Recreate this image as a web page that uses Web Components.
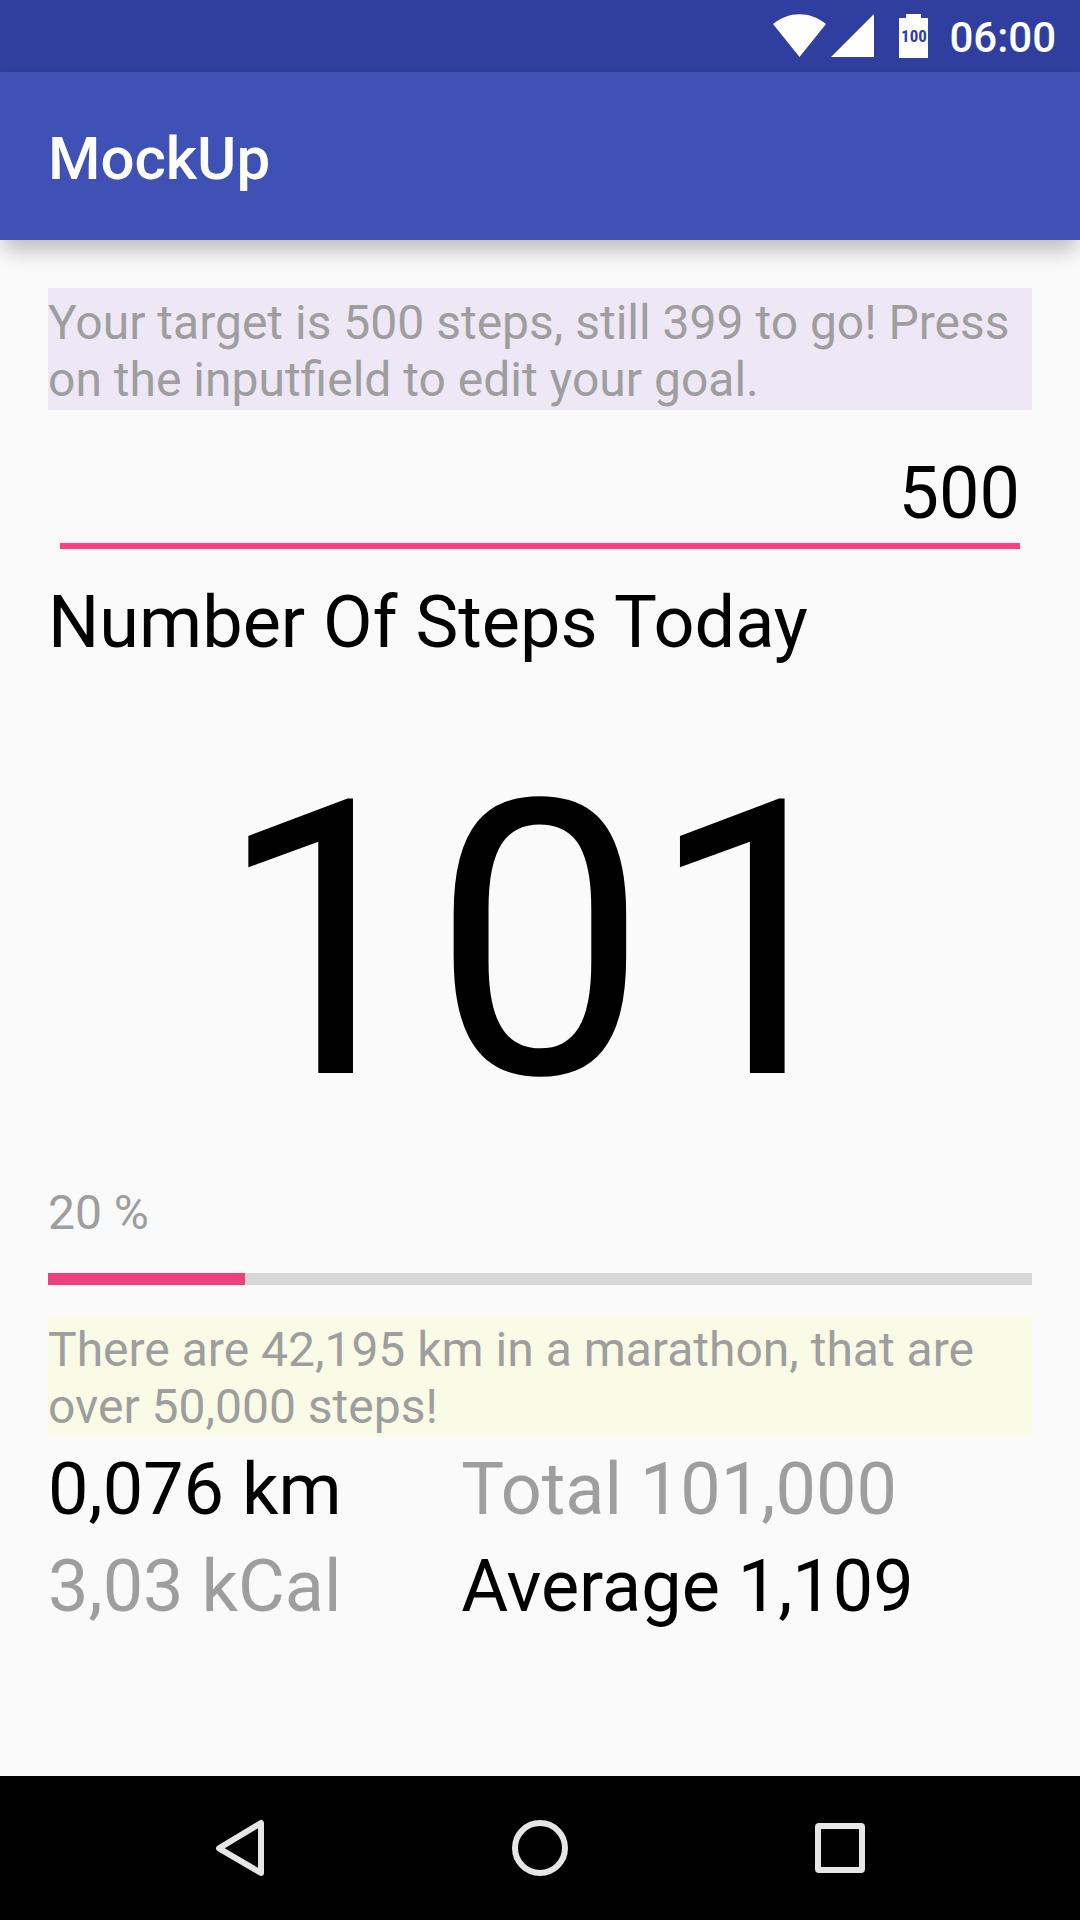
<!DOCTYPE html>
<html lang="en">
<head>
<meta charset="utf-8">
<meta name="viewport" content="width=device-width, initial-scale=1">
<title>MockUp</title>
<style>
  body { margin: 0; background: #fafafa; font-family: Roboto, "Noto Sans", sans-serif; color: #000; }
</style>
</head>
<body>
<step-app></step-app>

<script>
const define = (name, html) => {
  const template = document.createElement('template');
  template.innerHTML = html;
  customElements.define(name, class extends HTMLElement {
    constructor() {
      super();
      this.attachShadow({ mode: 'open' }).append(template.content.cloneNode(true));
    }
  });
};

define('status-bar', `
  <style>
    :host { display: flex; align-items: center; justify-content: flex-end; height: 72px; padding: 0 24px; background: #303f9f; color: #fff; }
    svg { display: block; fill: #fff; }
    .signal { margin-left: 5px; }
    .battery { margin: 0 21px 0 25px; }
    .battery text { fill: #303f9f; font: 700 17px "Roboto Condensed", Roboto, sans-serif; text-anchor: middle; }
    time { font-size: 42px; font-weight: 500; line-height: 49px; padding-top: 3px; }
  </style>
  <svg class="wifi" width="53" height="44" viewBox="0 0 53 44" aria-label="Wi-Fi" role="img"><path d="M0 10C16-3 37-3 53 10L26.500 43Z"/></svg>
  <svg class="signal" width="43" height="44" viewBox="0 0 43 44" aria-label="Signal" role="img"><path d="M43 0V43H0Z"/></svg>
  <svg class="battery" width="29" height="44" viewBox="0 0 29 44" aria-label="Battery" role="img"><path d="M7 0H22V4H29V44H0V4H7Z"/><text x="15" y="28">100</text></svg>
  <time>06:00</time>
`);

define('app-bar', `
  <style>
    :host { display: flex; align-items: center; box-sizing: border-box; height: 168px; padding: 6px 48px 0; background: #3f51b5; color: #fff; box-shadow: 0 14px 20px -4px rgba(0, 0, 0, .26); }
    h1 { margin: 0; font-size: 60px; font-weight: 500; line-height: 70px; }
  </style>
  <h1><slot></slot></h1>
`);

define('hint-card', `
  <style>
    :host { display: block; padding: 6px 0 2px; background: #ede7f6; color: #9e9e9e; font-size: 48px; line-height: 57px; }
    :host([tone="lime"]) { background: #f9fbe7; }
  </style>
  <slot></slot>
`);

define('goal-field', `
  <style>
    :host { display: block; padding: 0 12px; }
    input { display: block; box-sizing: border-box; width: 100%; height: 139px; margin: 0; padding: 41px 0 8px; border: 0; border-bottom: 6px solid #ff4081; border-radius: 0; outline: 0; background: none; color: inherit; font: 72px/84px Roboto, "Noto Sans", sans-serif; text-align: right; }
  </style>
  <input type="text" inputmode="numeric" aria-label="Step goal" value="500">
`);

define('step-count', `
  <style>
    :host { display: block; }
    h2 { margin: 32px 0 0; font-size: 72px; font-weight: 400; line-height: 84px; }
    p { margin: 52px 0 0; font-size: 384px; line-height: 450px; text-align: center; }
  </style>
  <h2>Number Of Steps Today</h2>
  <p><slot></slot></p>
`);

define('goal-progress', `
  <style>
    :host { display: block; padding: 17px 0 30px; }
    label { display: block; margin-bottom: 32px; color: #9e9e9e; font-size: 48px; line-height: 57px; }
    progress { display: block; width: 100%; height: 12px; border: 0; appearance: none; -webkit-appearance: none; background: #d6d6d6; }
    progress::-webkit-progress-bar { background: #d6d6d6; }
    progress::-webkit-progress-value { background: #ec407a; }
  </style>
  <label for="bar">20 %</label>
  <progress id="bar" value="20" max="100"></progress>
`);

define('stat-grid', `
  <style>
    :host { display: grid; grid-template-columns: 42% 58%; font-size: 72px; line-height: 84px; }
    ::slotted(*) { padding: 11px 0 2px; white-space: nowrap; }
    ::slotted(.muted) { color: #9e9e9e; }
  </style>
  <slot></slot>
`);

define('nav-bar', `
  <style>
    :host { display: grid; grid-template-columns: repeat(3, 1fr); height: 144px; padding: 0 90px; background: #000; }
    button { display: grid; place-items: center; padding: 0; border: 0; background: none; }
    svg { display: block; fill: none; stroke: #e6e6e6; stroke-width: 6; stroke-linejoin: round; }
  </style>
  <button aria-label="Back"><svg width="60" height="60" viewBox="0 0 60 60"><path d="M9 30.300L51 5V55Z"/></svg></button>
  <button aria-label="Home"><svg width="60" height="60" viewBox="0 0 60 60"><circle cx="30" cy="30" r="25"/></svg></button>
  <button aria-label="Recent apps"><svg width="60" height="60" viewBox="0 0 60 60"><rect x="8" y="8" width="44" height="44" rx="1"/></svg></button>
`);

define('step-app', `
  <style>
    :host { display: flex; flex-direction: column; min-height: 100vh; }
    main { flex: 1; padding: 48px 48px 0; }
  </style>
  <status-bar></status-bar>
  <app-bar>MockUp</app-bar>
  <main>
    <hint-card>Your target is 500 steps, still 399 to go! Press on the inputfield to edit your goal.</hint-card>
    <goal-field></goal-field>
    <step-count>101</step-count>
    <goal-progress></goal-progress>
    <hint-card tone="lime">There are 42,195 km in a marathon, that are over 50,000 steps!</hint-card>
    <stat-grid>
      <span>0,076 km</span>
      <span class="muted">Total 101,000</span>
      <span class="muted">3,03 kCal</span>
      <span>Average 1,109</span>
    </stat-grid>
  </main>
  <nav-bar></nav-bar>
`);
</script>
</body>
</html>
